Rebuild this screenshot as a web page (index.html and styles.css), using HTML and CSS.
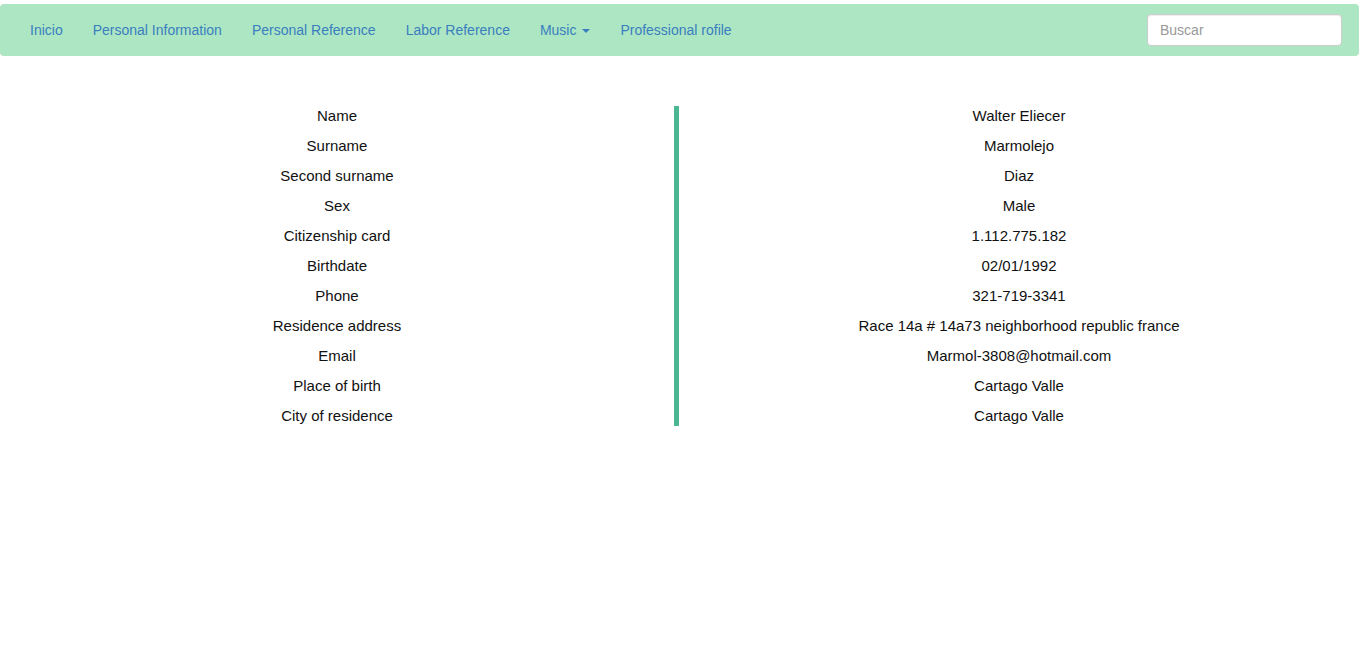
FILE: index.html
```html
<!DOCTYPE html>
<html>
<head>
<meta charset="utf-8">
<link rel="stylesheet" href="styles.css">
</head>
<body>
<nav class="navbar">
  <ul class="nav">
    <li><a href="#">Inicio</a></li>
    <li><a href="#">Personal Information</a></li>
    <li><a href="#">Personal Reference</a></li>
    <li><a href="#">Labor Reference</a></li>
    <li><a href="#">Music <span class="caret"></span></a></li>
    <li><a href="#">Professional rofile</a></li>
  </ul>
  <form class="search">
    <input type="text" placeholder="Buscar">
  </form>
</nav>
<main class="info">
  <div class="col labels">
    <div>Name</div>
    <div>Surname</div>
    <div>Second surname</div>
    <div>Sex</div>
    <div>Citizenship card</div>
    <div>Birthdate</div>
    <div>Phone</div>
    <div>Residence address</div>
    <div>Email</div>
    <div>Place of birth</div>
    <div>City of residence</div>
  </div>
  <div class="bar"></div>
  <div class="col values">
    <div>Walter Eliecer</div>
    <div>Marmolejo</div>
    <div>Diaz</div>
    <div>Male</div>
    <div>1.112.775.182</div>
    <div>02/01/1992</div>
    <div>321-719-3341</div>
    <div>Race 14a # 14a73 neighborhood republic france</div>
    <div>Marmol-3808@hotmail.com</div>
    <div>Cartago Valle</div>
    <div>Cartago Valle</div>
  </div>
</main>
</body>
</html>
```
FILE: styles.css
```css
* { box-sizing: border-box; }
html, body { margin: 0; padding: 0; }
body {
  font-family: "Liberation Sans", Arial, sans-serif;
  font-size: 14px;
  line-height: 20px;
  color: #111;
  background: #fff;
}
.navbar {
  margin: 4px 2px 0 0;
  height: 52px;
  background: #ade6c3;
  border-radius: 4px;
  display: flex;
  align-items: center;
  justify-content: space-between;
  padding: 0 17px 0 15px;
}
.nav {
  list-style: none;
  margin: 0;
  padding: 0;
  display: flex;
}
.nav a {
  display: block;
  padding: 15px;
  color: #3a7ebf;
  text-decoration: none;
}
.caret {
  display: inline-block;
  width: 0;
  height: 0;
  margin-left: 2px;
  vertical-align: middle;
  border-top: 4px solid #3a7ebf;
  border-left: 4px solid transparent;
  border-right: 4px solid transparent;
}
.search { margin: 0; }
.search input {
  width: 195px;
  height: 32px;
  border: 1px solid #ccc;
  border-radius: 4px;
  padding: 6px 12px;
  font-family: inherit;
  font-size: 14px;
  color: #555;
  background: #fff;
  box-shadow: inset 0 1px 1px rgba(0,0,0,.075);
}
.search input::placeholder { color: #999; }
.info {
  display: grid;
  grid-template-columns: 674px 5px 1fr;
  margin: 50px 2px 0 0;
  font-size: 15px;
}
.col {
  display: flex;
  flex-direction: column;
  gap: 10px;
  text-align: center;
}
.bar { background: #4cb693; }
```
